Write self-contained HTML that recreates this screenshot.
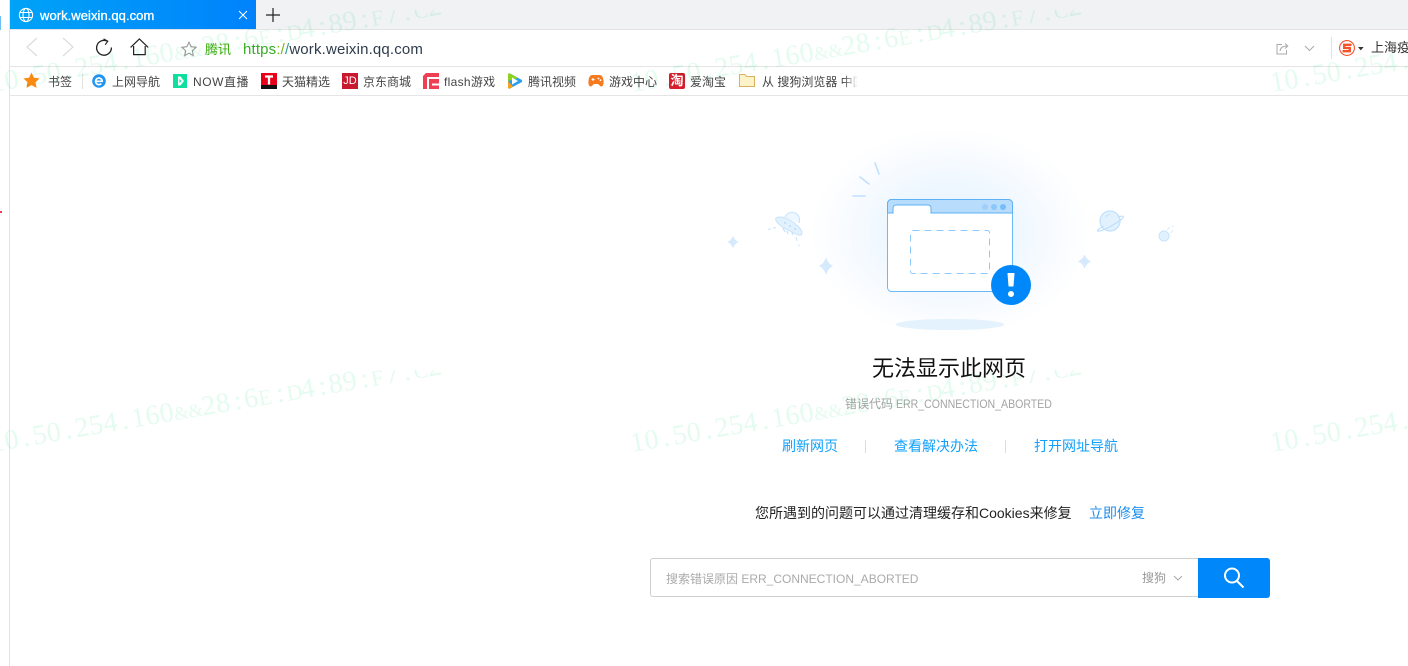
<!DOCTYPE html>
<html lang="zh"><head><meta charset="utf-8"><title>无法显示此网页</title>
<style>
html,body{margin:0;padding:0;width:1408px;height:666px;overflow:hidden;background:#fff}
body{position:relative;font-family:"Liberation Sans","Noto Sans CJK SC",sans-serif;color:#333}
.a{position:absolute}
.t{position:absolute;white-space:nowrap;line-height:20px;height:20px}
.bm{font-size:12px;color:#444;letter-spacing:0}
svg{position:absolute;overflow:visible}
</style></head><body>
<div class="a" style="left:9px;top:0;width:1399px;height:29px;background:#f1f2f4"></div>
<div class="a" style="left:10px;top:0;width:246px;height:29px;background:linear-gradient(90deg,#00a3f7,#0082fc)"></div>
<div class="a" style="left:10px;top:29px;width:1398px;height:1px;background:#e3e3e5"></div>
<div class="a" style="left:10px;top:66px;width:1398px;height:1px;background:#e5e5e5"></div>
<div class="a" style="left:10px;top:95px;width:1398px;height:1px;background:#e5e5e5"></div>
<div class="a" style="left:9px;top:0;width:1px;height:666px;background:#e3e3e3"></div>
<div class="a" style="left:0;top:16px;width:1px;height:14px;background:#6cc0f2"></div>
<div class="a" style="left:0;top:211px;width:2px;height:2px;background:#f0395a"></div>

<!-- tab -->
<svg style="left:18px;top:7px" width="16" height="16" viewBox="0 0 16 16" fill="none" stroke="#fff" stroke-width="1.1"><circle cx="8" cy="8" r="6.6"/><ellipse cx="8" cy="8" rx="3" ry="6.6"/><path d="M1.8 5.5h12.4M1.8 10.5h12.4"/></svg>
<div class="t" style="left:40px;top:6px;font-size:13px;color:#fff;letter-spacing:.05px;-webkit-text-stroke:.3px #fff">work.weixin.qq.com</div>
<svg style="left:238px;top:10px" width="10" height="10" fill="none" stroke="#fff" stroke-width="1"><path d="M1 1l8 8M9 1l-8 8"/></svg>
<svg style="left:266px;top:8px" width="14" height="14" fill="none" stroke="#222" stroke-width="1.2"><path d="M7 0v14M0 7h14"/></svg>

<!-- nav -->
<svg style="left:26px;top:38px" width="76" height="18" fill="none" stroke="#dcdcdc" stroke-width="1.2"><path d="M11 0L1 9l10 9"/><path d="M37 0l10 9-10 9"/></svg>
<svg style="left:95px;top:38px" width="18" height="18" fill="none" stroke="#222" stroke-width="1.3"><path d="M12.4 3.2A7.4 7.4 0 1 0 16.4 9.500"/><path d="M8.600 0.800l4.200 2.400-2.600 3.600" stroke-width="1.100"/></svg>
<svg style="left:130px;top:38px" width="19" height="18" fill="none" stroke="#222" stroke-width="1.2"><path d="M.6 9.400L9.400 1l8.800 8.400M3.600 8v8.600h11.600V8"/></svg>
<svg style="left:181px;top:41px" width="16" height="16" fill="none" stroke="#9a9a9a" stroke-width="1.1"><path d="M8 1.200l2.100 4.500 4.900.6-3.600 3.400.9 4.900L8 12.200l-4.300 2.400.9-4.900L1 6.300l4.900-.6z"/></svg>
<div class="t" style="left:205px;top:40px;font-size:13px;color:#3bac0b">腾讯</div>
<div class="t" style="left:243px;top:40px;font-size:15px;letter-spacing:.16px;color:#2f3c4c"><span style="color:#35ad24">https</span><span style="color:#7cb518">:/</span><span style="color:#2f9a9a">/</span>work.weixin.qq.com</div>
<svg style="left:1276px;top:42px" width="13" height="13" fill="none" stroke="#aaa" stroke-width="1"><path d="M6 2.500H1v9.500h9.500V8"/><path d="M4 9c.5-3.500 3-5 7-5M9 1.500L11.800 4 9 6.500"/></svg>
<svg style="left:1304px;top:45px" width="11" height="7" fill="none" stroke="#aaa" stroke-width="1"><path d="M1 1l4.500 4.500L10 1"/></svg>
<div class="a" style="left:1331px;top:37px;width:1px;height:22px;background:#e3e3e3"></div>
<svg style="left:1339px;top:40px" width="16" height="16" fill="none"><circle cx="8" cy="8" r="7.400" fill="#fff" stroke="#f2532a" stroke-width="1.100"/><path d="M12.500 4.800H5.200v3.200h5.600v3.200H3.500" stroke="#f2532a" stroke-width="2.300"/></svg>
<svg style="left:1358px;top:47px" width="6" height="4"><path d="M0 0h5.600L2.800 3.400z" fill="#333"/></svg>
<div class="t" style="left:1371px;top:38px;font-size:13px;color:#333;width:37px;overflow:hidden">上海疫情</div>

<!-- bookmarks -->
<svg style="left:23px;top:72px" width="17" height="16"><path d="M8.500.5l2.500 5.200 5.600.7-4.100 3.900 1.100 5.600-5.100-2.800-5 2.800 1-5.600L.4 6.400 6 5.700z" fill="#fb8a12"/></svg>
<div class="t bm" style="left:48px;top:72px">书签</div>
<div class="a" style="left:82px;top:73px;width:1px;height:16px;background:#e3e3e3"></div>
<svg style="left:92px;top:74px" width="14" height="14"><circle cx="7" cy="7" r="6.800" fill="#1f94f2"/><path d="M3.600 7.300h6.600A3.300 3.300 0 1 0 9.300 9.600" fill="none" stroke="#fff" stroke-width="1.700"/></svg>
<div class="t bm" style="left:112px;top:72px">上网导航</div>
<svg style="left:173px;top:74px" width="14" height="14"><rect width="14" height="14" fill="#0ddf9f"/><path d="M5 2.500h2.500L11 7l-3.500 4.500H5z" fill="#fff"/><path d="M6.500 5L8.500 7 6.500 9z" fill="#0ddf9f"/></svg>
<div class="t bm" style="left:193px;top:72px;letter-spacing:.55px">NOW直播</div>
<div class="a" style="left:261px;top:73px;width:16px;height:16px;background:linear-gradient(#e60018 75%,#111 75%)"></div>
<svg style="left:261px;top:73px" width="16" height="16"><path d="M4 3.500h8M8 3.500v8" stroke="#fff" stroke-width="2.300" fill="none"/></svg>
<div class="t bm" style="left:282px;top:72px">天猫精选</div>
<div class="a" style="left:342px;top:73px;width:16px;height:16px;background:#c9192e;color:#fff;font-size:11px;line-height:16px;text-align:center">JD</div>
<div class="t bm" style="left:363px;top:72px">京东商城</div>
<svg style="left:423px;top:73px" width="16" height="16"><path d="M0 3L3 0H16V16H0z" fill="#ee3f55"/><path d="M16 5H5V16M9 11.500H16" fill="none" stroke="#fff" stroke-width="2"/></svg>
<div class="t bm" style="left:444px;top:72px;letter-spacing:.3px">flash游戏</div>
<svg style="left:507px;top:73px" width="16" height="16"><path d="M1 1.500C1 .6 2 0 3 .5l11.500 6.200c1 .6 1 2 0 2.600L3 15.500c-1 .5-2-.1-2-1z" fill="#2d9ff0"/><path d="M1 8V1.500C1 .6 2 0 3 .5L11 5z" fill="#8ed21f"/><path d="M1 8v6.500c0 .9 1 1.500 2 1L6 13.500z" fill="#f7a21a"/><path d="M5 4.500L11 8 5 11.500z" fill="#fff"/></svg>
<div class="t bm" style="left:528px;top:72px">腾讯视频</div>
<svg style="left:588px;top:74px" width="16" height="14"><path d="M4.500 1h7c2.500 0 3.500 2 4 5.500.4 3-.3 6-2.200 6-1.500 0-2.300-2.500-3.800-2.500H6.500c-1.500 0-2.300 2.500-3.800 2.500-1.900 0-2.600-3-2.200-6C1 3 2 1 4.500 1z" fill="#f47b20"/><path d="M3.500 5.500h3M5 4v3" stroke="#fff" stroke-width="1"/><circle cx="10.500" cy="4.500" r=".9" fill="#fff"/><circle cx="12.500" cy="6.200" r=".9" fill="#fff"/></svg>
<div class="t bm" style="left:609px;top:72px">游戏中心</div>
<div class="a" style="left:669px;top:73px;width:16px;height:16px;background:#d81e2c;border-radius:2px;color:#fff;font-size:13px;font-weight:700;line-height:16px;text-align:center">淘</div>
<div class="t bm" style="left:690px;top:72px">爱淘宝</div>
<svg style="left:739px;top:74px" width="16" height="13"><path d="M.5 12.500V.5h5.500l1.500 2h8v10z" fill="#fdf3c8" stroke="#d9b25f"/></svg>
<div class="t bm" style="left:762px;top:72px;width:96px;overflow:hidden;-webkit-mask-image:linear-gradient(90deg,#000 85%,transparent)">从 搜狗浏览器 中国</div>

<!-- illustration -->
<div class="a" style="left:810px;top:128px;width:280px;height:210px;background:radial-gradient(closest-side,#e8f4ff 0%,#eef7ff 45%,#f8fbff 75%,#fff 100%)"></div>
<svg style="left:0;top:0" width="1408" height="666" fill="none">
 <ellipse cx="950" cy="324.500" rx="54" ry="5.500" fill="#e3f2fd"/>
 <rect x="887.500" y="199.500" width="125" height="92" rx="4" fill="#fff" stroke="#6db8f7"/>
 <path d="M887.500 213V203.500a4 4 0 0 1 4-4h117a4 4 0 0 1 4 4V213H931v-5a3 3 0 0 0-3-3h-32a3 3 0 0 0-3 3v5z" fill="#b8dcfb" stroke="#5db0f5"/>
 <circle cx="985" cy="207" r="3" fill="#9fd0fb"/><circle cx="994" cy="207" r="3" fill="#8cc7fb"/><circle cx="1003" cy="207" r="3" fill="#76bdfa"/>
 <rect x="910.500" y="230.500" width="79" height="43" rx="2" stroke="#8ecafb" stroke-dasharray="7 5"/>
 <circle cx="1011" cy="285" r="20" fill="#0088fa"/>
 <path d="M1008 273.500h6l-1 12.500h-4z" fill="#fff" stroke="#fff" stroke-linejoin="round"/><circle cx="1011" cy="294" r="3" fill="#fff"/>
 <g stroke="#bfe0fd" stroke-width="1.600" stroke-linecap="round"><path d="M853 196h12M860 177l9 7M875 163l4 11"/></g>
 <g fill="#d5eafd" stroke="#d5eafd" stroke-width=".6" stroke-linejoin="round">
  <path d="M733 236.500Q734.500 240.500 738 242 734.500 243.500 733 247.500 731.500 243.500 728 242 731.500 240.500 733 236.500z"/>
  <path d="M826 258Q828 264 832.500 266 828 268 826 274 824 268 819.500 266 824 264 826 258z"/>
  <path d="M1084.500 255Q1086 259.500 1090.500 261.500 1086 263.500 1084.500 268 1083 263.500 1078.500 261.500 1083 259.500 1084.500 255z"/>
 </g>
 <!-- ufo -->
 <g stroke="#c6e3fd" stroke-width="1">
  <path d="M785 217a7.500 7.500 0 0 1 14 6" fill="#eef7ff"/>
  <path d="M776 218c3-2 9-1 14 2 5 3 12 9 12 13 0 4-5 2-12-2-7-3-16-9-14-13z" fill="#e2f1fe"/>
  <path d="M783 228l2 4M787 231l1 3M792 232l1 3" stroke-width="1.300"/>
  <path d="M768 229.500l3-.8M773 228.200l3-.8M796 237l1 4M798.500 244.500l.8 1.500"/>
 </g>
 <g fill="#a9d5fb"><circle cx="785" cy="223" r=".9"/><circle cx="790" cy="226" r=".9"/><circle cx="795" cy="229" r=".9"/></g>
 <!-- planet -->
 <circle cx="1110" cy="221" r="10" fill="#e2f1fe" stroke="#bfe0fd" stroke-width="1.200"/>
 <path d="M1103.500 226c-4 2.500-6.500 4-6 4.800.7 1.200 7-1 14-5s12.500-8 12-9.200c-.3-.7-2.500-.5-5.500.3" stroke="#bfe0fd" stroke-width="1.200"/>
 <path d="M1106 217a5 5 0 0 1 4-2.500" stroke="#bfe0fd"/>
 <!-- comet -->
 <circle cx="1164" cy="236" r="5" fill="#e2f1fe" stroke="#c6e3fd"/>
 <path d="M1167 230l3-3M1170.500 233l2.500-2.500M1172 227l2-1.500" stroke="#d8ebfd" stroke-width="1"/>
</svg>

<!-- text -->
<div class="t" style="left:872px;top:354px;height:30px;line-height:30px;font-size:22px;color:#111">无法显示此网页</div>
<div class="t" style="left:845px;top:394px;font-size:12px;color:#a3a3a3">错误代码 <span style="display:inline-block;transform:scaleX(.88);transform-origin:0 50%">ERR_CONNECTION_ABORTED</span></div>
<div class="t" style="left:782px;top:436px;font-size:14px;color:#12a0fb">刷新网页</div>
<div class="a" style="left:865px;top:440px;width:1px;height:13px;background:#ddd"></div>
<div class="t" style="left:894px;top:436px;font-size:14px;color:#12a0fb">查看解决办法</div>
<div class="a" style="left:1005px;top:440px;width:1px;height:13px;background:#d8dde6"></div>
<div class="t" style="left:1034px;top:436px;font-size:14px;color:#12a0fb">打开网址导航</div>
<div class="t" style="left:755px;top:503px;font-size:14px;color:#222">您所遇到的问题可以通过清理缓存和Cookies来修复</div>
<div class="t" style="left:1089px;top:503px;font-size:14px;color:#1b8eef">立即修复</div>

<!-- search -->
<div class="a" style="left:650px;top:558px;width:548px;height:39px;box-sizing:border-box;border:1px solid #cfcfcf;border-right:0;border-radius:3px 0 0 3px;background:#fff"></div>
<div class="a" style="left:1198px;top:558px;width:72px;height:40px;background:#0088fa;border-radius:0 3px 3px 0"></div>
<div class="t" style="left:666px;top:569px;font-size:12px;color:#aaa">搜索错误原因 ERR_CONNECTION_ABORTED</div>
<div class="t" style="left:1142px;top:568px;font-size:12px;color:#999">搜狗</div>
<svg style="left:1173px;top:575px" width="10" height="7" fill="none" stroke="#aaa"><path d="M1 1l4 4 4-4"/></svg>
<svg style="left:1223px;top:567px" width="21" height="21" fill="none" stroke="#fff" stroke-width="2"><circle cx="9" cy="8.500" r="7"/><path d="M14 14l6.500 6.500"/></svg>

<!-- watermark -->
<svg style="left:0;top:0;mix-blend-mode:multiply;pointer-events:none" width="1408" height="666">
 <defs>
  <clipPath id="c1"><rect x="-10" y="10" width="455" height="360"/></clipPath>
  <clipPath id="c2"><rect x="630" y="10" width="455" height="360"/></clipPath>
  <clipPath id="c3"><rect x="1270" y="10" width="455" height="360"/></clipPath>
  <clipPath id="c4"><rect x="-10" y="370" width="455" height="360"/></clipPath>
  <clipPath id="c5"><rect x="630" y="370" width="455" height="360"/></clipPath>
  <clipPath id="c6"><rect x="1270" y="370" width="455" height="360"/></clipPath>
 </defs>
 <g font-family="Liberation Serif,serif" font-size="28" fill="#e4fbf0">
  <g clip-path="url(#c1)"><text transform="translate(-8 92) rotate(-9.800)" x="0 14.300 32.600 42.900 57.200 75.500 85.800 100.100 114.400 132.700 143 157.300 171.600 185.900 200.200 214.500 228.800 247.100 257.400 271.700 290 300.300 314.600 333 343.200 357.500 375.800 386.100 400.400 418.700 429 443.300">10.50.254.160<tspan font-size="19">&amp;&amp;</tspan>28:6<tspan font-size="22">E</tspan>:<tspan font-size="22">D</tspan>4:89:<tspan font-size="22">F</tspan>7:<tspan font-size="22">C</tspan>2</text></g>
  <g clip-path="url(#c2)"><text transform="translate(632 92) rotate(-9.800)" x="0 14.300 32.600 42.900 57.200 75.500 85.800 100.100 114.400 132.700 143 157.300 171.600 185.900 200.200 214.500 228.800 247.100 257.400 271.700 290 300.300 314.600 333 343.200 357.500 375.800 386.100 400.400 418.700 429 443.300">10.50.254.160<tspan font-size="19">&amp;&amp;</tspan>28:6<tspan font-size="22">E</tspan>:<tspan font-size="22">D</tspan>4:89:<tspan font-size="22">F</tspan>7:<tspan font-size="22">C</tspan>2</text></g>
  <g clip-path="url(#c3)"><text transform="translate(1272 92) rotate(-9.800)" x="0 14.300 32.600 42.900 57.200 75.500 85.800 100.100 114.400 132.700 143 157.300 171.600 185.900 200.200 214.500 228.800 247.100 257.400 271.700 290 300.300 314.600 333 343.200 357.500 375.800 386.100 400.400 418.700 429 443.300">10.50.254.160<tspan font-size="19">&amp;&amp;</tspan>28:6<tspan font-size="22">E</tspan>:<tspan font-size="22">D</tspan>4:89:<tspan font-size="22">F</tspan>7:<tspan font-size="22">C</tspan>2</text></g>
  <g clip-path="url(#c4)"><text transform="translate(-8 452) rotate(-9.800)" x="0 14.300 32.600 42.900 57.200 75.500 85.800 100.100 114.400 132.700 143 157.300 171.600 185.900 200.200 214.500 228.800 247.100 257.400 271.700 290 300.300 314.600 333 343.200 357.500 375.800 386.100 400.400 418.700 429 443.300">10.50.254.160<tspan font-size="19">&amp;&amp;</tspan>28:6<tspan font-size="22">E</tspan>:<tspan font-size="22">D</tspan>4:89:<tspan font-size="22">F</tspan>7:<tspan font-size="22">C</tspan>2</text></g>
  <g clip-path="url(#c5)"><text transform="translate(632 452) rotate(-9.800)" x="0 14.300 32.600 42.900 57.200 75.500 85.800 100.100 114.400 132.700 143 157.300 171.600 185.900 200.200 214.500 228.800 247.100 257.400 271.700 290 300.300 314.600 333 343.200 357.500 375.800 386.100 400.400 418.700 429 443.300">10.50.254.160<tspan font-size="19">&amp;&amp;</tspan>28:6<tspan font-size="22">E</tspan>:<tspan font-size="22">D</tspan>4:89:<tspan font-size="22">F</tspan>7:<tspan font-size="22">C</tspan>2</text></g>
  <g clip-path="url(#c6)"><text transform="translate(1272 452) rotate(-9.800)" x="0 14.300 32.600 42.900 57.200 75.500 85.800 100.100 114.400 132.700 143 157.300 171.600 185.900 200.200 214.500 228.800 247.100 257.400 271.700 290 300.300 314.600 333 343.200 357.500 375.800 386.100 400.400 418.700 429 443.300">10.50.254.160<tspan font-size="19">&amp;&amp;</tspan>28:6<tspan font-size="22">E</tspan>:<tspan font-size="22">D</tspan>4:89:<tspan font-size="22">F</tspan>7:<tspan font-size="22">C</tspan>2</text></g>
 </g>
</svg>
</body></html>
